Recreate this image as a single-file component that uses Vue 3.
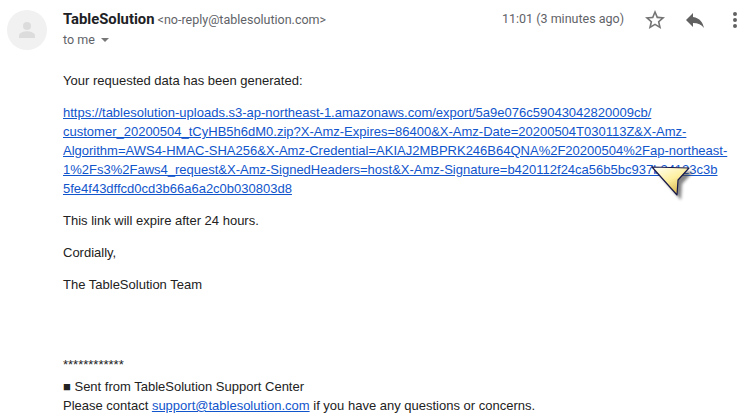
<script setup>
const linkLines = [
  'https://tablesolution-uploads.s3-ap-northeast-1.amazonaws.com/export/5a9e076c59043042820009cb/',
  'customer_20200504_tCyHB5h6dM0.zip?X-Amz-Expires=86400&X-Amz-Date=20200504T030113Z&X-Amz-',
  'Algorithm=AWS4-HMAC-SHA256&X-Amz-Credential=AKIAJ2MBPRK246B64QNA%2F20200504%2Fap-northeast-',
  '1%2Fs3%2Faws4_request&X-Amz-SignedHeaders=host&X-Amz-Signature=b420112f24ca56b5bc937b24123c3b',
  '5fe4f43dffcd0cd3b66a6a2c0b030803d8'
]
</script>

<template>
  <div class="mail">
    <header class="head">
      <div class="avatar">
        <svg viewBox="0 0 40 40" width="40" height="40">
          <circle cx="20" cy="20" r="20" fill="#f1f1f1" />
          <circle cx="20" cy="16" r="4" fill="#dcdcdc" />
          <path d="M12 28v-2.500c0-2.800 5.300-4.200 8-4.200s8 1.400 8 4.200V28z" fill="#dcdcdc" />
        </svg>
      </div>
      <div class="who">
        <div class="from"><b>TableSolution</b> <span class="addr">&lt;no-reply@tablesolution.com&gt;</span></div>
        <div class="to">to me <i class="caret"></i></div>
      </div>
      <div class="time">11:01 (3 minutes ago)</div>
      <div class="tools">
        <svg viewBox="0 0 24 24" width="24" height="24"><path fill="#757575" d="M22 9.240l-7.190-.620L12 2 9.190 8.630 2 9.240l5.460 4.730L5.820 21 12 17.270 18.180 21l-1.630-7.030L22 9.240zM12 15.400l-3.760 2.270 1-4.280-3.320-2.880 4.380-.380L12 6.100l1.710 4.040 4.380.380-3.320 2.880 1 4.280L12 15.400z"/></svg>
        <svg viewBox="0 0 24 24" width="24" height="24"><path fill="#616161" d="M10 9V5l-7 7 7 7v-4.100c5 0 8.500 1.600 11 5.100-1-5-4-10-11-11z"/></svg>
        <svg viewBox="0 0 24 24" width="24" height="24"><path fill="#616161" d="M12 8a2 2 0 1 0 0-4 2 2 0 0 0 0 4zm0 2a2 2 0 1 0 0 4 2 2 0 0 0 0-4zm0 6a2 2 0 1 0 0 4 2 2 0 0 0 0-4z"/></svg>
      </div>
    </header>
    <main class="body">
      <p>Your requested data has been generated:</p>
      <p class="url"><a href="#"><template v-for="l in linkLines" :key="l">{{ l }}<br /></template></a></p>
      <p>This link will expire after 24 hours.</p>
      <p>Cordially,</p>
      <p>The TableSolution Team</p>
      <div class="foot">
        <div class="stars">************</div>
        <div class="sent"><span class="sq">■</span> Sent from TableSolution Support Center</div>
        <div>Please contact <a href="#">support@tablesolution.com</a> if you have any questions or concerns.</div>
      </div>
    </main>
    <svg class="pointer" viewBox="0 0 48 44" width="48" height="44">
      <defs>
        <linearGradient id="g" x1="0.1" y1="0" x2="0.7" y2="1">
          <stop offset="0" stop-color="#fffff2" />
          <stop offset="0.5" stop-color="#fff0a0" />
          <stop offset="1" stop-color="#d2ad45" />
        </linearGradient>
        <filter id="b"><feGaussianBlur stdDeviation="1.800" /></filter>
      </defs>
      <path d="M7 7 L44 8 L33 20 L32 36 Z" fill="#444" opacity=".65" filter="url(#b)" />
      <path d="M3 3 L40 4 L29 16 L28 31 Z" fill="url(#g)" stroke="#1a1a4a" stroke-width="1.200" stroke-linejoin="round" />
    </svg>
  </div>
</template>

<style>
html, body { margin: 0; background: #fff; overflow: hidden; }
</style>

<style scoped>
.mail { position: relative; width: 744px; height: 417px; overflow: hidden; font-family: Roboto, "Liberation Sans", sans-serif; }
.head { display: flex; height: 52px; padding: 9px 0 0 7px; box-sizing: border-box; }
.avatar { width: 40px; height: 40px; margin: 1px 16px 0 0; }
.who { flex: 1; }
.from { font-size: 12.500px; line-height: 20px; color: #5f6368; }
.from b { font-size: 14.800px; font-weight: 700; color: #202124; }
.addr { font-size: 12.500px; color: #5f6368; }
.to { font-size: 12.500px; line-height: 20px; color: #5f6368; }
.caret { display: inline-block; margin-left: 3px; vertical-align: 2px; border: 4px solid transparent; border-top: 4px solid #777; border-bottom: 0; }
.time { font-size: 12.500px; line-height: 20px; color: #5f6368; }
.tools { display: flex; gap: 16px; margin: -1px -3px 0 19px; height: 24px; }
.body { padding: 19px 0 0 63px; font-family: "Liberation Sans", Arial, sans-serif; font-size: 13px; line-height: 19px; color: #222; }
.body p { margin: 0 0 13px; }
.body a { color: #1155cc; text-decoration: underline; }
.url { white-space: nowrap; }
.foot { margin-top: 61px; line-height: 19px; }
.stars { height: 19px; }
.sent { margin-top: 3px; height: 19px; }
.sq { line-height: 0; }
.pointer { position: absolute; left: 649px; top: 164px; }
</style>
